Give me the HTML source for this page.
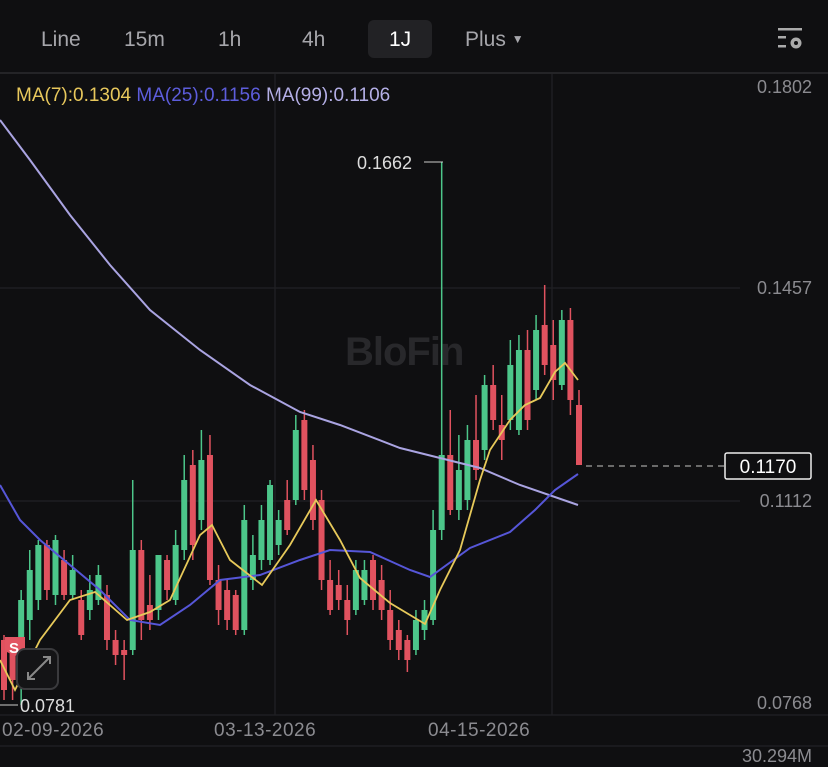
<!DOCTYPE html>
<html><head><meta charset="utf-8"><style>
body{margin:0;background:#0f0f11;width:828px;height:758px;overflow:hidden;font-family:"Liberation Sans",sans-serif;position:relative}
.t{position:absolute;top:28px;font-size:21px;color:#a6a6ab}
.sel{position:absolute;left:368px;top:20px;width:64px;height:38px;background:#222225;border-radius:6px}
.ax{position:absolute;right:16px;font-size:18px;color:#8b8b90}
.dt{position:absolute;top:720px;font-size:19px;color:#8b8b90;letter-spacing:0.5px}
</style></head><body>
<div class="sel"></div>
<div class="t" style="left:41px">Line</div>
<div class="t" style="left:124px">15m</div>
<div class="t" style="left:218px">1h</div>
<div class="t" style="left:302px">4h</div>
<div class="t" style="left:389px;color:#fff">1J</div>
<div class="t" style="left:465px">Plus <span style="font-size:12px;position:relative;top:-3px">▼</span></div>
<svg style="position:absolute;left:776px;top:28px" width="32" height="24"><g fill="#aaa"><rect x="2" y="0" width="24" height="2.5"/><rect x="2" y="8" width="8" height="2.5"/><rect x="2" y="17" width="8" height="2.5"/><circle cx="20" cy="15" r="5.5"/></g><circle cx="20" cy="15" r="2" fill="#0f0f11"/></svg>
<div style="position:absolute;left:0;top:72px;width:828px;height:2px;background:#242427"></div>
<div style="position:absolute;left:16px;top:85px;font-size:19px;white-space:nowrap"><span style="color:#e8c85c">MA(7):0.1304</span> <span style="color:#5d5ddb">MA(25):0.1156</span> <span style="color:#b4afe6">MA(99):0.1106</span></div>
<div class="ax" style="top:77px">0.1802</div>
<div class="ax" style="top:278px">0.1457</div>
<div class="ax" style="top:491px">0.1112</div>
<div class="ax" style="top:693px">0.0768</div>
<div style="position:absolute;left:345px;top:330px;font-size:40px;font-weight:bold;color:#28282b;letter-spacing:-1px">BloFin</div>
<svg id="c" style="position:absolute;left:0;top:0" width="828" height="758">
<g stroke="#1f1f22" stroke-width="1.5"><line x1="0" y1="288" x2="740" y2="288"/><line x1="0" y1="501" x2="740" y2="501"/><line x1="275" y1="74" x2="275" y2="715"/><line x1="552" y1="74" x2="552" y2="715"/><line x1="0" y1="715" x2="828" y2="715"/><line x1="0" y1="746" x2="828" y2="746"/></g>
<g id="cd"></g>
<polyline fill="none" stroke="#aaa4e2" stroke-width="2" points="0,120 30,160 70,215 110,265 150,310 200,350 250,385 300,412 340,425 400,448 440,458 480,468 520,485 578,505"/>
<polyline fill="none" stroke="#5656d8" stroke-width="2" points="0,485 20,520 40,540 70,565 100,590 130,620 160,625 190,605 220,580 260,575 300,560 330,550 370,552 410,570 430,577 470,548 510,532 535,510 555,490 578,474"/>
<polyline fill="none" stroke="#e7c95a" stroke-width="1.8" points="0,660 15,690 40,640 70,600 95,592 127,620 150,612 170,600 200,535 212,525 230,560 262,585 290,545 316,500 340,540 360,578 390,603 425,624 440,590 460,550 480,480 490,450 510,420 525,405 540,398 555,372 565,363 578,380"/>
<line x1="586" y1="466" x2="724" y2="466" stroke="#888" stroke-width="1.5" stroke-dasharray="6,5"/>
<rect x="725" y="453" width="86" height="26" rx="2" fill="#0f0f11" stroke="#eee" stroke-width="1.5"/>
<text x="768" y="473" fill="#fff" font-size="19" text-anchor="middle" font-family="Liberation Sans">0.1170</text>
<line x1="424" y1="162" x2="443" y2="162" stroke="#ccc"/>
<text x="357" y="169" fill="#ddd" font-size="18" font-family="Liberation Sans">0.1662</text>
<line x1="0" y1="705" x2="18" y2="705" stroke="#ccc"/>
<text x="20" y="712" fill="#ddd" font-size="18" font-family="Liberation Sans">0.0781</text>
<path d="M5 637h20v14l-10 5l-10-5z" fill="#e25562"/><text x="9" y="653" fill="#fff" font-size="15" font-family="Liberation Sans" font-weight="bold">S</text>
<rect x="17" y="649" width="41" height="40" rx="8" fill="#141416" stroke="#3a3a3d" stroke-width="2"/>
<path d="M28 679l22-22M43 657h7v7M28 672v7h7" fill="none" stroke="#888" stroke-width="2"/>
</svg>
<div class="dt" style="left:2px">02-09-2026</div>
<div class="dt" style="left:214px">03-13-2026</div>
<div class="dt" style="left:428px">04-15-2026</div>
<div class="ax" style="top:746px">30.294M</div>
<script>
var d=[["r",640,690,635,700],["r",650,680,640,700],["g",600,650,590,705],["g",570,620,550,640],["g",545,600,540,610],["r",545,590,540,600],["g",540,595,535,605],["r",560,595,550,600],["g",570,595,555,600],["r",600,635,590,640],["g",590,610,575,620],["g",575,600,565,605],["r",595,640,585,650],["r",640,655,630,665],["r",650,655,640,680],["g",550,650,480,655],["r",550,620,540,640],["r",605,620,575,630],["g",555,610,555,620],["r",560,590,555,600],["g",545,600,530,605],["g",480,550,455,560],["r",465,545,450,560],["g",460,520,430,530],["r",455,580,435,585],["r",580,610,565,625],["r",590,620,580,630],["r",595,630,590,635],["g",520,630,505,635],["g",555,580,535,590],["g",520,560,505,570],["g",485,560,480,565],["g",520,545,510,555],["r",500,530,480,535],["g",430,500,415,505],["r",420,490,410,500],["r",460,520,445,530],["r",500,580,490,590],["r",580,610,560,615],["r",585,600,570,610],["r",600,620,585,635],["g",570,610,560,615],["g",570,600,560,605],["r",560,600,555,610],["r",580,610,565,620],["r",610,640,590,650],["r",630,650,620,660],["r",640,660,635,672],["g",620,650,610,655],["g",610,630,600,640],["g",530,620,510,625],["g",455,530,162,540],["r",455,510,410,515],["g",470,510,435,520],["g",440,500,425,510],["r",440,470,395,480],["g",385,450,375,460],["r",385,420,365,430],["r",425,440,395,460],["g",365,420,340,430],["g",350,430,335,435],["r",350,420,330,430],["g",330,390,315,400],["r",325,365,285,375],["r",345,380,320,400],["g",320,385,310,390],["r",320,400,308,415],["r",405,465,390,465]];
var n=d.length,sp=575/(n-1);var s="";d.forEach(function(c,i){var x=4+i*sp,col=c[0]=="g"?"#4cc68a":"#e0525f";s+='<line x1="'+x+'" y1="'+c[3]+'" x2="'+x+'" y2="'+c[4]+'" stroke="'+col+'" stroke-width="1.5"/><rect x="'+(x-3)+'" y="'+c[1]+'" width="6" height="'+Math.max(2,c[2]-c[1])+'" fill="'+col+'"/>';});
document.getElementById("cd").innerHTML=s;
</script>
</body></html>
